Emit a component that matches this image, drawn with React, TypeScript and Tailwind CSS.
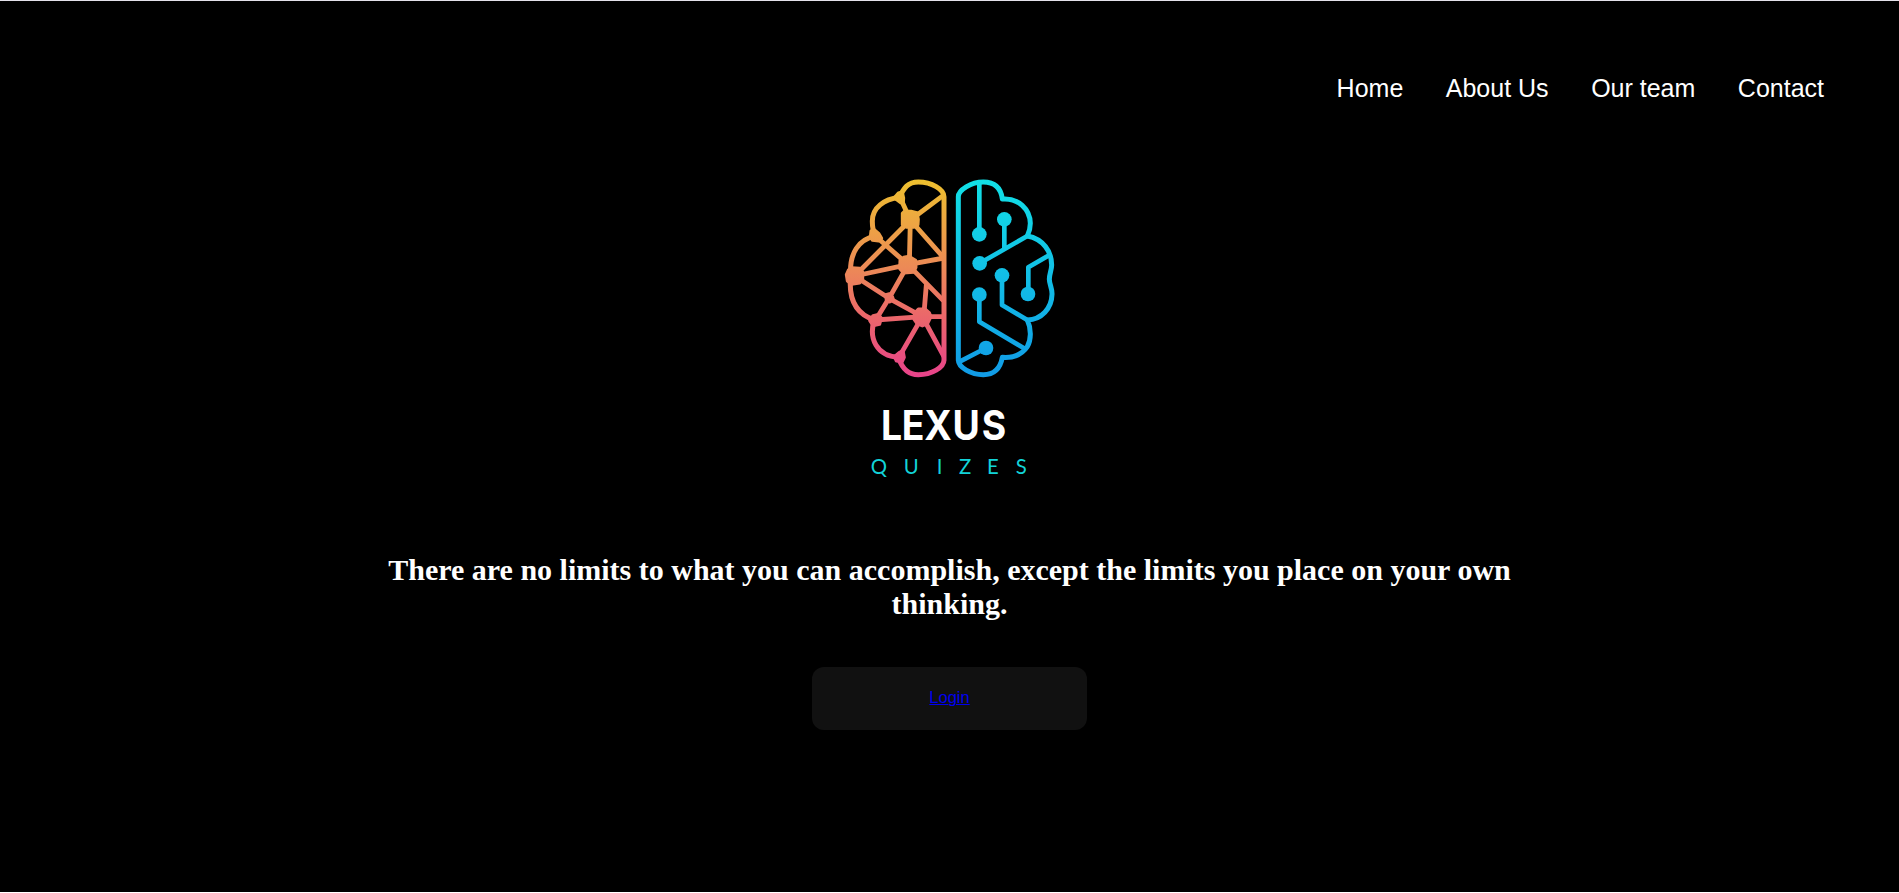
const links = ["Home", "About Us", "Our team", "Contact"];

const neurons = [
  "M202 130L208 124L228 124L246 128L250 148L249 164L236 172H216L202 164Z",
  "M195 272L206 262L222 259L242 271L243 292L236 307L206 309L194 296Z",
  "M40 300L50 293L74 295L83 306L83 328L74 339L50 343L37 333L34 314Z",
  "M152 374L163 371L173 381L175 389L164 396L154 391Z",
  "M238 430L250 417H270L283 428L288 440L278 461L262 468L246 461L237 448Z",
  "M104 452L114 437L130 433L139 444L134 463L114 467Z",
  "M178 560L192 548L204 542L208 562L202 575L184 573Z",
  "M106 200L108 183L118 179L132 191L140 205L131 213L112 211Z",
  "M177 84L190 69L202 66L206 84L205 99L196 98L187 91Z",
];

const pads = [
  [433, 193], [508, 148], [434, 280], [501, 316], [579, 372], [433, 374], [453, 534],
];

function Logo() {
  return (
    <svg
      className="block h-[330px] w-[230px]"
      viewBox="0 0 690 990"
      fill="none"
      role="img"
      aria-label="Lexus Quizes"
    >
      <defs>
        <linearGradient id="warm" gradientUnits="userSpaceOnUse" x1="0" y1="30" x2="0" y2="620">
          <stop offset="0" stopColor="#eec02f" />
          <stop offset="0.45" stopColor="#ec8957" />
          <stop offset="0.7" stopColor="#eb666b" />
          <stop offset="0.9" stopColor="#e94e80" />
          <stop offset="1" stopColor="#e8438b" />
        </linearGradient>
        <linearGradient id="cool" gradientUnits="userSpaceOnUse" x1="0" y1="30" x2="0" y2="620">
          <stop offset="0" stopColor="#12e0e6" />
          <stop offset="1" stopColor="#119be6" />
        </linearGradient>
      </defs>
      <g stroke="url(#warm)" strokeWidth="15" strokeLinejoin="round">
        <path d="M327 572V80C327 58 290 36 250 36C218 36 207 54 193 82C148 88 111 112 112 155C112 175 116 188 121 198C72 208 42 248 47 318C40 385 62 432 118 450C100 505 125 558 190 562C203 600 222 614 250 614C290 614 327 592 327 570" />
        <path
          strokeWidth="14.5"
          d="M226 150L325 76M226 150L325 262M226 150L223 284M226 150L59 318M121 198L219 284L327 264M219 284L59 318L162 385L262 440M219 284L162 385L122 450L262 440L193 560M262 440L327 560M262 440H327M219 284L325 392M274 345L267 430M195 82L226 150"
        />
      </g>
      <g fill="url(#warm)" stroke="url(#warm)" strokeWidth="9" strokeLinejoin="round">
        {neurons.map((d) => (
          <path key={d} d={d} />
        ))}
      </g>
      <g stroke="url(#cool)" strokeWidth="15" strokeLinejoin="round">
        <path d="M370 572V80C370 60 408 36 445 36C480 36 498 55 502 87C550 83 585 118 586 160C586 177 582 188 577 198C625 207 650 245 650 285C650 300 643 312 643 328C643 342 652 356 651 373C650 415 620 448 577 450C590 478 588 510 577 530C562 552 540 565 502 562C495 600 475 614 445 614C408 614 370 592 370 570" />
        <path
          strokeWidth="14"
          d="M433 36V193M508 148V238M434 280L577 198M501 316V405L577 450M645 254L580 292V372M433 374V455L572 538M453 534L374 575"
        />
      </g>
      <g fill="url(#cool)">
        {pads.map(([x, y]) => (
          <circle key={`${x}-${y}`} cx={x} cy={y} r={22} />
        ))}
      </g>
      <text
        transform="scale(.91 1)"
        x="152 220 294 387 484"
        y="811"
        fill="#fff"
        fontSize="123"
        fontWeight="700"
        fontFamily="Inter, sans-serif"
      >
        LEXUS
      </text>
      <text
        x="107 206 305 372 456 542"
        y="911"
        fill="#12d3d8"
        fontSize="61"
        fontFamily="Lato, sans-serif"
      >
        QUIZES
      </text>
    </svg>
  );
}

export default function App() {
  return (
    <div className="flex h-[893px] w-full flex-col items-center border-y border-t-[#e4e1ea] border-b-white bg-black">
      <nav className="flex w-full justify-end gap-[42.5px] pt-[73px] pr-[75px] font-['Liberation_Sans',Arial,sans-serif] text-[25px] leading-[29px] text-white">
        {links.map((label) => (
          <a key={label} href="#">{label}</a>
        ))}
      </nav>
      <main className="flex flex-col items-center pt-[67px]">
        <Logo />
        <h1 className="mt-[53px] w-[1140px] text-center font-['Liberation_Serif','Times_New_Roman',serif] text-[30px] leading-[34px] font-bold text-white">
          There are no limits to what you can accomplish, except the limits you place on your own thinking.
        </h1>
        <button className="mt-[46px] h-[63px] w-[275px] rounded-xl bg-[#111] pb-[2px] font-['Liberation_Sans',Arial,sans-serif] text-[16.5px] text-[#0000ee]">
          <a href="#" className="underline decoration-1 underline-offset-1">Login</a>
        </button>
      </main>
    </div>
  );
}
